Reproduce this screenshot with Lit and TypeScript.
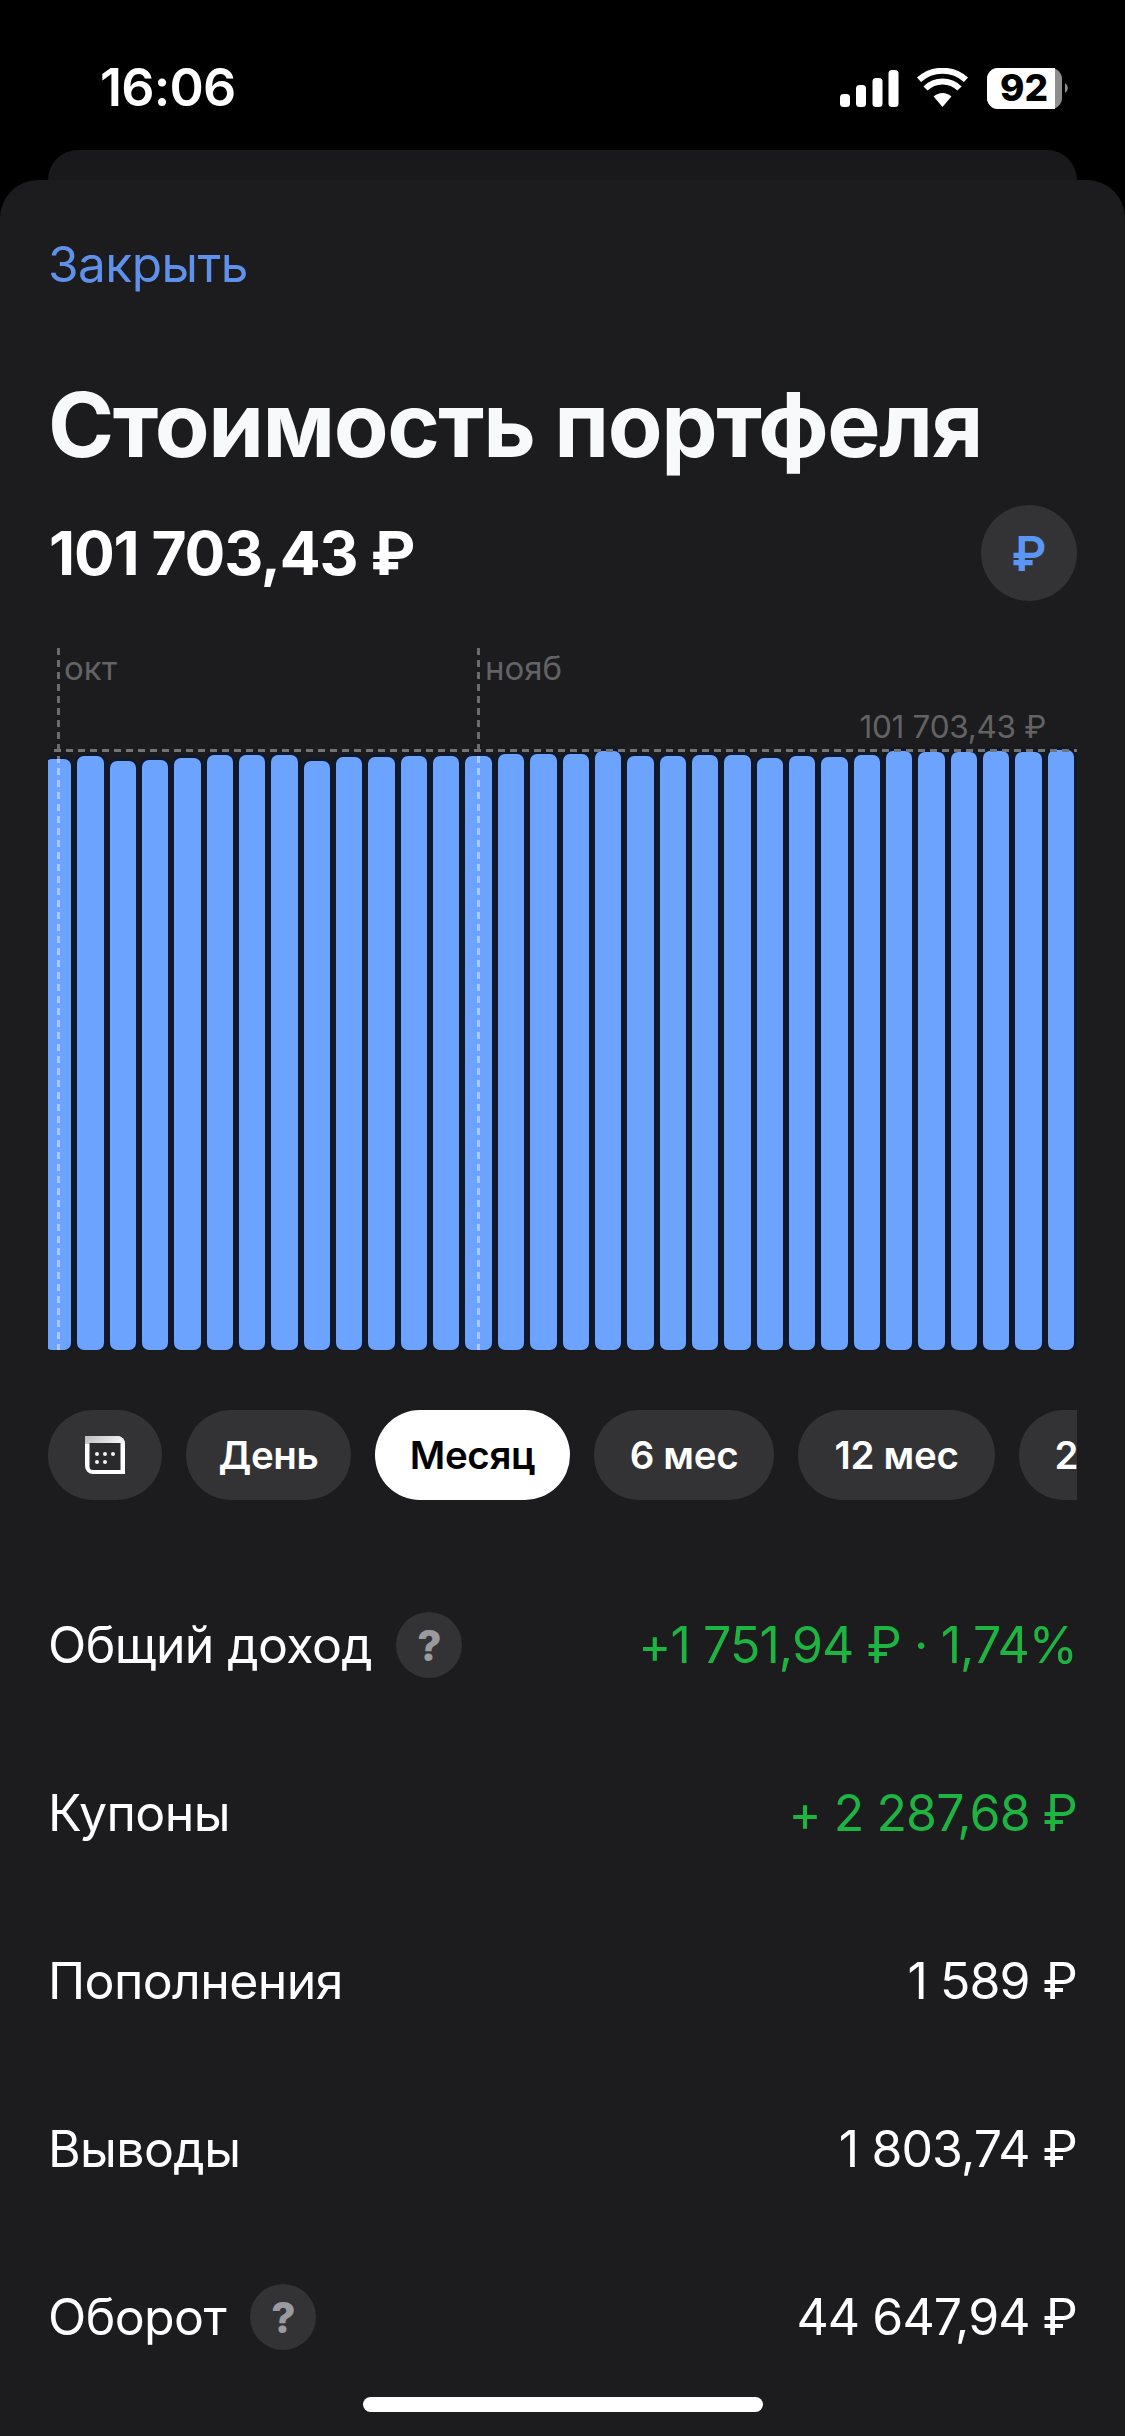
import { LitElement, html, css } from "lit";
import { customElement } from "lit/decorators.js";

const TOPS = [759, 756, 761, 760, 758, 755, 755, 755, 761, 757, 757, 756, 756, 756, 754, 754, 754, 751, 756, 756, 755, 755, 758, 756, 757, 755, 751, 752, 752, 751, 752, 750];
const CHART_BOTTOM = 1350;

@customElement("app-root")
export class AppRoot extends LitElement {
  static styles = css`
    :host {
      display: block;
      width: 1125px;
      height: 2436px;
      background: #000;
      overflow: hidden;
      position: relative;
      font-family: Inter, "Liberation Sans", sans-serif;
      color: #fff;
    }
    .status {
      height: 150px;
      box-sizing: border-box;
      padding: 62px 56px 0 100px;
      display: flex;
      justify-content: space-between;
      align-items: flex-start;
    }
    .time { font-size: 52px; line-height: 52px; font-weight: 600; letter-spacing: -0.8px; }
    .status-icons { display: block; width: 229px; height: 46px; margin-top: 6px; }
    .batt-text { font: 800 37px Inter, sans-serif; fill: #000; }
    .peek {
      height: 30px;
      margin: 0 48px;
      background: #19191b;
      border-radius: 30px 30px 0 0;
    }
    .sheet {
      height: 2256px;
      box-sizing: border-box;
      background: #1c1c1e;
      border-radius: 38px 38px 0 0;
      padding: 54px 48px 0;
      overflow: hidden;
    }
    .close { font-size: 49.5px; line-height: 60px; color: #5f91eb; letter-spacing: -0.5px; }
    .title {
      margin: 76px 0 0;
      font-size: 89.5px;
      line-height: 110px;
      font-weight: 700;
      letter-spacing: -1.45px;
      color: #f8f9fb;
    }
    .total-row {
      margin-top: 25px;
      height: 96px;
      display: flex;
      justify-content: space-between;
      align-items: center;
    }
    .total { font-size: 60.5px; font-weight: 700; letter-spacing: -1.2px; padding-left: 1px; }
    .cur {
      width: 96px;
      height: 96px;
      border-radius: 50%;
      background: #333336;
      color: #5b96f5;
      font-size: 48px;
      font-weight: 600;
      display: flex;
      align-items: center;
      justify-content: center;
    }
    .chart { margin-top: 47px; height: 702px; position: relative; }
    .bars {
      position: absolute;
      inset: 0;
      overflow: hidden;
    }
    .bars-inner {
      display: flex;
      gap: 6px;
      align-items: flex-end;
      height: 100%;
      margin-left: -3px;
    }
    .bar {
      flex: 0 0 26.35px;
      background: #6ca3ff;
      border-radius: 7px;
      box-shadow: 0 0 2px 3px #10192b;
    }
    .vline {
      position: absolute;
      top: 0;
      height: 102px;
      width: 3px;
      background: repeating-linear-gradient(to bottom, #6b6b6d 0 7px, transparent 7px 12px);
    }
    .vline.overlay {
      top: 108px;
      height: auto;
      bottom: 0;
      background: repeating-linear-gradient(to bottom, rgba(255, 255, 255, 0.42) 0 7px, transparent 7px 12px);
    }
    .hline {
      position: absolute;
      left: 6px;
      right: 0;
      top: 101px;
      height: 3px;
      background: repeating-linear-gradient(to right, #737375 0 7px, transparent 7px 12px);
    }
    .lbl { position: absolute; font-size: 33px; line-height: 36px; color: #636365; }
    .oct { left: 16px; top: 2px; }
    .nov { left: 437px; top: 2px; }
    .price { right: 31px; top: 61px; font-size: 31.5px; letter-spacing: -0.3px; }
    .chips {
      margin-top: 60px;
      height: 90px;
      display: flex;
      gap: 24px;
      overflow: hidden;
    }
    .chip {
      flex: none;
      height: 90px;
      border-radius: 45px;
      background: #333336;
      display: flex;
      align-items: center;
      justify-content: center;
      font-size: 38.5px;
      font-weight: 600;
      box-sizing: border-box;
      letter-spacing: -0.3px;
    }
    .chip.active { background: #fff; color: #000; }
    .chip.icon { width: 114px; }
    .rows { margin-top: 61px; }
    .row {
      height: 168px;
      display: flex;
      justify-content: space-between;
      align-items: center;
      font-size: 50px;
    }
    .label { display: flex; align-items: center; gap: 24px; letter-spacing: -0.6px; }
    .value { letter-spacing: -0.9px; }
    .green { color: #1db441; }
    .q {
      width: 66px;
      height: 66px;
      border-radius: 50%;
      background: #333336;
      color: #9a9aa0;
      font-size: 42px;
      font-weight: 800;
      display: flex;
      align-items: center;
      justify-content: center;
    }
    .home {
      position: absolute;
      left: 363px;
      top: 2397px;
      width: 400px;
      height: 15px;
      border-radius: 8px;
      background: #fff;
    }
  `;

  private statusIcons() {
    return html`<svg class="status-icons" viewBox="0 -2 229 46" aria-hidden="true">
      <g fill="#fff">
        <rect x="0" y="24" width="10" height="13" rx="3.5"></rect>
        <rect x="16" y="15" width="10" height="22" rx="3.5"></rect>
        <rect x="32.5" y="8" width="10" height="29" rx="3.5"></rect>
        <rect x="48.5" y="0" width="10" height="37" rx="3.5"></rect>
        <path d="M102.5 37 L93.6 26.5 a13 13 0 0 1 17.8 0 Z"></path>
      </g>
      <g fill="none" stroke="#fff" stroke-width="6">
        <path d="M85.5 18.5 a24 24 0 0 1 34 0"></path>
        <path d="M79 9.8 a35 35 0 0 1 47 0"></path>
      </g>
      <rect x="147" y="-2" width="75" height="41" rx="11" fill="#8e8e8e"></rect>
      <path d="M158 -2 H215 V39 H158 a11 11 0 0 1 -11 -11 V9 a11 11 0 0 1 11 -11 Z" fill="#fff"></path>
      <path d="M225 13 a6 6 0 0 1 0 10 Z" fill="#8e8e8e"></path>
      <text class="batt-text" x="184" y="31" text-anchor="middle">92</text>
    </svg>`;
  }

  private calendar() {
    return html`<svg width="40" height="38" viewBox="0 0 40 38" aria-hidden="true">
      <defs>
        <linearGradient id="calTop" x1="0" x2="1" y1="0" y2="0.2">
          <stop offset="0" stop-color="#bdbdbf"></stop>
          <stop offset="1" stop-color="#f2f2f2"></stop>
        </linearGradient>
      </defs>
      <path d="M0 0 H32 a8 8 0 0 1 8 8 V38 H8 a8 8 0 0 1 -8 -8 Z" fill="#fff"></path>
      <path d="M0 0 H32 a8 8 0 0 1 8 8 H0 Z" fill="url(#calTop)"></path>
      <path d="M4.5 7 H35.5 V34 H8 a3.5 3.5 0 0 1 -3.5 -3.5 Z" fill="#2a2a2d"></path>
      <g fill="#f2f2f2">
        <circle cx="12" cy="18" r="2"></circle>
        <circle cx="20" cy="18" r="2"></circle>
        <circle cx="28" cy="18" r="2"></circle>
        <circle cx="12" cy="26" r="2"></circle>
        <circle cx="20" cy="26" r="2"></circle>
      </g>
    </svg>`;
  }

  private row(label: string, value: string, green = false, q = false) {
    return html`<div class="row">
      <div class="label">${label}${q ? html`<span class="q">?</span>` : ""}</div>
      <div class="value ${green ? "green" : ""}">${value}</div>
    </div>`;
  }

  render() {
    const chips = [
      ["День", 165, false],
      ["Месяц", 195, true],
      ["6 мес", 180, false],
      ["12 мес", 197, false],
      ["2 года", 190, false],
    ] as const;
    return html`
      <div class="status">
        <div class="time">16:06</div>
        ${this.statusIcons()}
      </div>
      <div class="peek"></div>
      <div class="sheet">
        <div class="close">Закрыть</div>
        <h1 class="title">Стоимость портфеля</h1>
        <div class="total-row">
          <div class="total">101 703,43 ₽</div>
          <div class="cur">₽</div>
        </div>
        <div class="chart">
          <div class="bars">
            <div class="bars-inner">
              ${TOPS.map((t) => html`<div class="bar" style="height:${CHART_BOTTOM - t}px"></div>`)}
            </div>
          </div>
          <div class="vline" style="left:9px"></div>
          <div class="vline" style="left:429px"></div>
          <div class="vline overlay" style="left:9px"></div>
          <div class="vline overlay" style="left:429px"></div>
          <div class="hline"></div>
          <div class="lbl oct">окт</div>
          <div class="lbl nov">нояб</div>
          <div class="lbl price">101 703,43 ₽</div>
        </div>
        <div class="chips">
          <div class="chip icon">${this.calendar()}</div>
          ${chips.map(
            ([t, w, a]) => html`<div class="chip ${a ? "active" : ""}" style="width:${w}px">${t}</div>`
          )}
        </div>
        <div class="rows">
          ${this.row("Общий доход", "+1 751,94 ₽ · 1,74%", true, true)}
          ${this.row("Купоны", "+ 2 287,68 ₽", true)}
          ${this.row("Пополнения", "1 589 ₽")}
          ${this.row("Выводы", "1 803,74 ₽")}
          ${this.row("Оборот", "44 647,94 ₽", false, true)}
        </div>
      </div>
      <div class="home"></div>
    `;
  }
}
